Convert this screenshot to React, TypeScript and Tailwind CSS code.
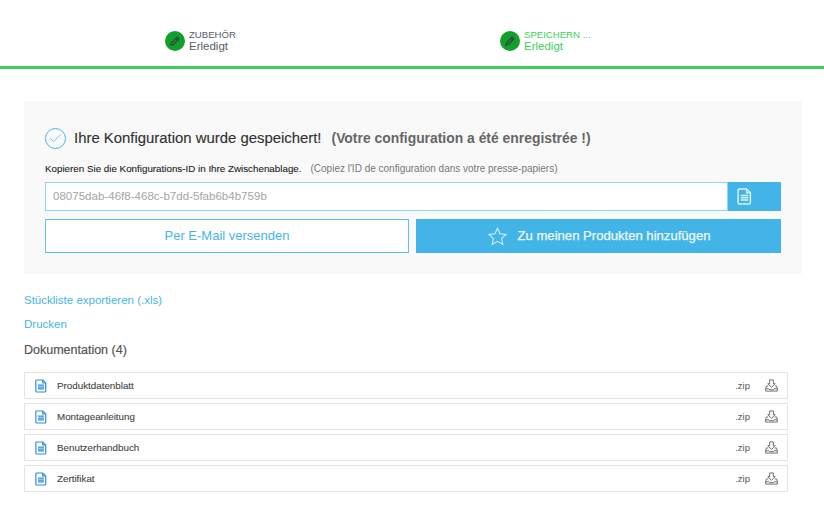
import { Check } from "lucide-react";

const docs = ["Produktdatenblatt", "Montageanleitung", "Benutzerhandbuch", "Zertifikat"];

function Pencil() {
  return (
    <span className="flex h-5 w-5 shrink-0 items-center justify-center rounded-full bg-[#12a02c]">
      <svg viewBox="0 0 12 12" className="h-3 w-3" fill="none" stroke="#33503a" strokeWidth="1.6">
        <path d="M2 10l.5-2.2L8 2.3l1.8 1.8L4.2 9.5z" />
        <path d="M7 3.3l1.8 1.8" />
      </svg>
    </span>
  );
}

function Step({ title, active }: { title: string; active?: boolean }) {
  return (
    <div className="flex w-[335px] items-center gap-[4px] pl-[165px]">
      <Pencil />
      <div className={active ? "-mt-[1px] text-[#3ecf5a]" : "-mt-[1px] text-[#55606b]"}>
        <div className="text-[9.6px] leading-[11px]">{title}</div>
        <div className="text-[11.5px] leading-[12px]">Erledigt</div>
      </div>
    </div>
  );
}

function PageIcon({ className, stroke, width = "1.2" }: { className: string; stroke: string; width?: string }) {
  return (
    <svg viewBox="0 0 14 16" className={className} fill="none" stroke={stroke} strokeWidth={width}>
      <path d="M2 1h7l3.5 3.5V14a1 1 0 0 1-1 1H2a1 1 0 0 1-1-1V2a1 1 0 0 1 1-1z" />
      <path d="M9 1v3.5h3.5M3.5 7h7M3.5 9.2h7M3.5 11.4h7" />
    </svg>
  );
}

function DownloadIcon() {
  return (
    <svg viewBox="0 0 14 14" className="h-[13px] w-[13px]" fill="none" stroke="#666" strokeWidth="1">
      <path d="M5 1h4v4h2L7 9 3 5h2z" />
      <path d="M3.5 7.5H1.5L.7 10.5v2.5h12.6v-2.5l-.8-3h-2M.7 10.5h3.5l.8 1h4l.8-1h3.5" />
    </svg>
  );
}

export default function App() {
  return (
    <div className="min-h-[521px] bg-white font-['Liberation_Sans',Arial,sans-serif]">
      <header className="flex h-[69px] items-start border-b-[3px] border-[#3ecf5a] pt-[30px]">
        <Step title="ZUBEHÖR" />
        <Step title="SPEICHERN ..." active />
      </header>

      <main className="px-[24px] pt-[32px]">
        <section className="w-[778px] bg-[#f9f9f9] px-[21px] pb-[21px] pt-[27px]">
          <div className="flex h-[20px] items-center">
            <span className="flex h-[21px] w-[21px] items-center justify-center rounded-full border border-[#45b5e8]">
              <Check className="h-[15px] w-[15px] text-[#45b5e8]" strokeWidth={1.2} />
            </span>
            <h1 className="ml-[8px] text-[14.9px] text-[#333]" style={{ WebkitTextStroke: "0.15px #333" }}>Ihre Konfiguration wurde gespeichert!</h1>
            <span className="ml-[10px] text-[13.9px] font-bold text-[#666]">(Votre configuration a été enregistrée !)</span>
          </div>
          <div className="mt-[15px] flex items-center leading-[12px]">
            <span className="text-[9.8px] text-[#222]" style={{ WebkitTextStroke: "0.1px #222" }}>Kopieren Sie die Konfigurations-ID in Ihre Zwischenablage.</span>
            <span className="ml-[9px] text-[10px] text-[#777]">(Copiez l'ID de configuration dans votre presse-papiers)</span>
          </div>
          <div className="mt-[7px] flex h-[29px]">
            <div className="flex flex-1 items-center border border-[#8fd3f2] bg-white pl-[7px] text-[11.55px] text-[#a5a5a5]">08075dab-46f8-468c-b7dd-5fab6b4b759b</div>
            <button className="flex w-[53px] items-center bg-[#42b4e8] pl-[9px]">
              <PageIcon className="h-[17px] w-[15px]" stroke="#d8f2fc" width="1.4" />
            </button>
          </div>
          <div className="mt-[8px] flex h-[34px] gap-[7px]">
            <button className="w-[364px] border border-[#5cbfec] bg-white text-[13px] text-[#45b5e8]">Per E-Mail versenden</button>
            <button className="flex w-[365px] items-center justify-center gap-[10px] bg-[#42b4e8] text-[13.1px] text-[#eef9fe]" style={{ WebkitTextStroke: "0.25px #eef9fe" }}>
              <svg viewBox="0 0 24 24" className="h-[21px] w-[21px]" fill="none" stroke="#d8f1fc" strokeWidth="1.2">
                <path d="M12 2.5l2.9 6.3 6.9.8-5.1 4.6 1.4 6.8-6.1-3.4-6.1 3.4 1.4-6.8-5.1-4.6 6.9-.8z" />
              </svg>
              Zu meinen Produkten hinzufügen
            </button>
          </div>
        </section>

        <a className="mt-[20px] block text-[11.5px] leading-[13px] text-[#45b5e8]">Stückliste exportieren (.xls)</a>
        <a className="mt-[11px] block text-[11.5px] leading-[13px] text-[#45b5e8]">Drucken</a>
        <h2 className="mt-[12px] text-[12.5px] leading-[15px] text-[#555]" style={{ WebkitTextStroke: "0.2px #555" }}>Dokumentation (4)</h2>

        <ul className="mt-[14px] flex w-[764px] flex-col gap-[4px]">
          {docs.map((d) => (
            <li key={d} className="flex h-[27px] items-center border border-[#e4e4e4] bg-white pl-[10px] pr-[9px]">
              <PageIcon className="h-[14px] w-[12px]" stroke="#2f8fd6" width="1.4" />
              <span className="ml-[10px] flex-1 pt-[1px] text-[9.8px] text-[#444]" style={{ WebkitTextStroke: "0.1px #444" }}>{d}</span>
              <span className="pt-[1px] text-[9.5px] text-[#555]">.zip</span>
              <span className="ml-[15px]"><DownloadIcon /></span>
            </li>
          ))}
        </ul>
      </main>
    </div>
  );
}
